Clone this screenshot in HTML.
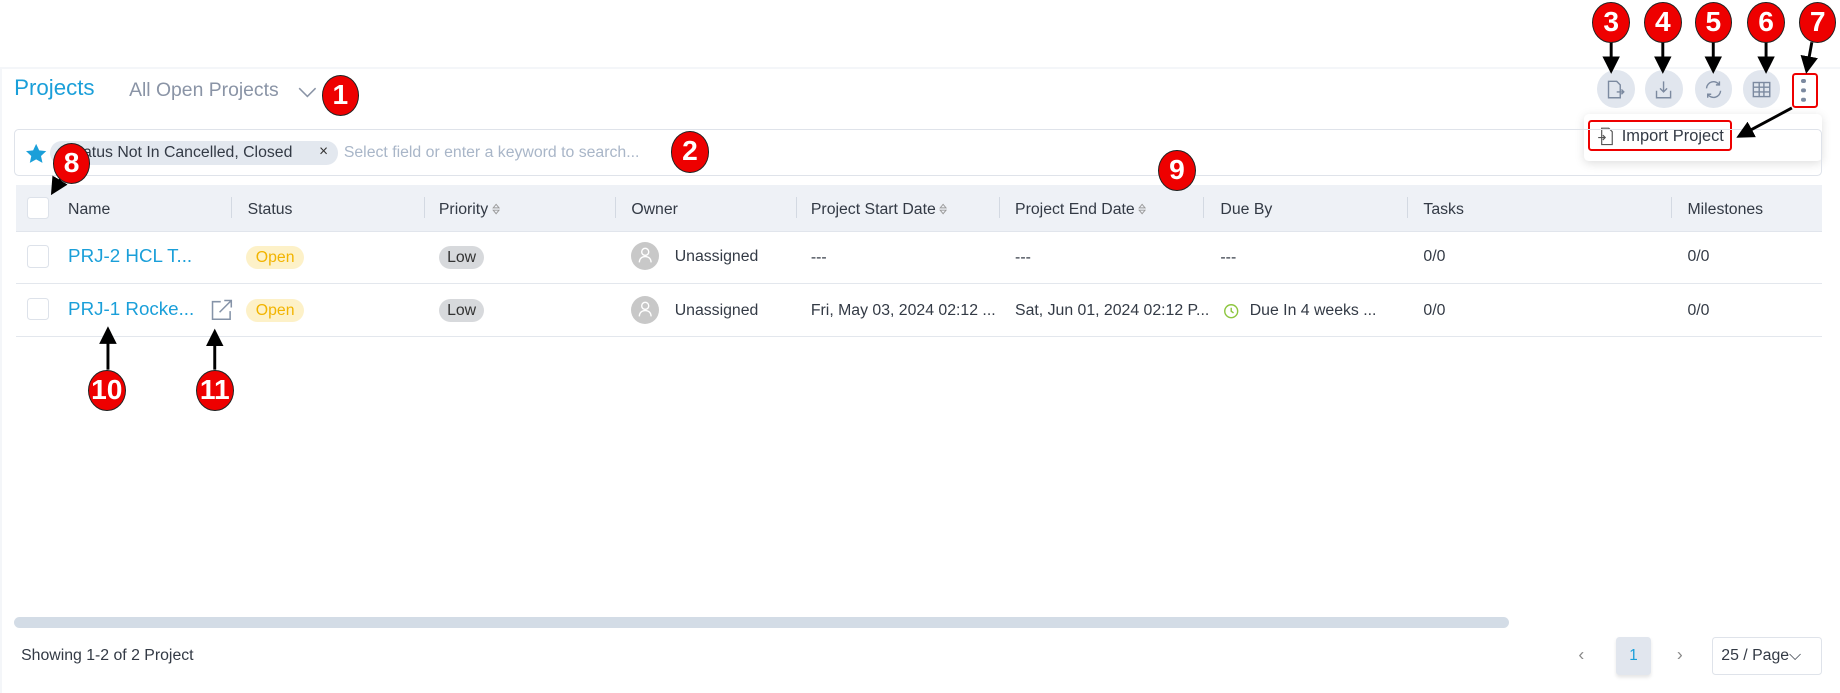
<!DOCTYPE html>
<html><head><meta charset="utf-8">
<style>
html,body{margin:0;padding:0;width:1840px;height:693px;overflow:hidden;background:#fff}
#w{position:relative;width:1568px;height:591px;zoom:1.17347;font-family:"Liberation Sans",sans-serif;color:#333a45;font-size:13.5px}
.a{position:absolute}
.panel{left:0;top:57px;width:1568px;height:534px;border-top:2px solid #f4f6f9;border-left:2px solid #f4f6f9;box-sizing:border-box}
.badge{position:absolute;width:32px;height:35px;margin:-17px 0 0 -16px;border-radius:50%;background:#e00;border:1.5px solid #222;box-sizing:border-box;color:#fff;font-weight:bold;font-size:24px;text-align:center;line-height:33px}
.ib{position:absolute;width:32px;height:32px;margin:-16px 0 0 -16px;border-radius:50%;background:#e1e6ee}
.ib svg{position:absolute;left:7px;top:7px}
.hd{top:158px;left:14px;width:1539px;height:39px;background:#eef1f6;border-bottom:1px solid #e1e5ec}
.th{position:absolute;top:171px;font-size:13.5px;color:#333a45}
.sep{position:absolute;top:168px;width:1px;height:18px;background:#d3d9e2}
.cb{position:absolute;left:23px;width:19px;height:19px;border:1px solid #dde2ea;border-radius:3px;background:#fff;box-sizing:border-box}
.row{position:absolute;left:14px;width:1539px;height:1px;background:#e3e7ed}
.td{position:absolute;font-size:13.5px;color:#333a45;white-space:nowrap}
.lnk{color:#1a9fd9;font-size:16px}
.open{position:absolute;background:#fdf1c8;color:#f2b400;border-radius:11px;padding:2px 8px;font-size:13.5px}
.low{position:absolute;background:#d7d9dc;color:#333;border-radius:11px;padding:2px 7px;font-size:13.5px}
.av{position:absolute;width:24px;height:24px;border-radius:50%;background:#c8c8c8}
.sort{display:inline-block;vertical-align:middle;margin-left:3px;width:7px;height:12px}
</style></head><body><div id="w">
<div class="a panel"></div>
<div class="a" style="left:12px;top:64px;font-size:19px;color:#1a9fd9">Projects</div>
<div class="a" style="left:110px;top:67px;font-size:16.5px;color:#8a94a6">All Open Projects</div>
<svg class="a" style="left:254px;top:74px" width="16" height="10"><path d="M1 1l7 7 7-7" fill="none" stroke="#8a94a6" stroke-width="1.3"/></svg>

<div class="ib" style="left:1377px;top:76px"><svg width="18" height="18" viewBox="0 0 18 18" fill="none" stroke="#7c8aa0" stroke-width="1.2"><path d="M3 2h7l3 3v11H3z"/><path d="M10 11h6M14 9l2 2-2 2"/></svg></div>
<div class="ib" style="left:1418px;top:76px"><svg width="18" height="18" viewBox="0 0 18 18" fill="none" stroke="#7c8aa0" stroke-width="1.2"><path d="M9 2v9M6 8l3 3 3-3M3 10v6h12v-6"/></svg></div>
<div class="ib" style="left:1460px;top:76px"><svg width="18" height="18" viewBox="0 0 18 18" fill="none" stroke="#7c8aa0" stroke-width="1.2"><path d="M3 8a6 6 0 0 1 11-3M15 10a6 6 0 0 1-11 3M14 2v3h-3M4 16v-3h3"/></svg></div>
<div class="ib" style="left:1501px;top:76px"><svg width="18" height="18" viewBox="0 0 18 18" fill="none" stroke="#7c8aa0" stroke-width="1.2"><rect x="2" y="3" width="14" height="12"/><path d="M2 7h14M2 11h14M7 3v12M11 3v12"/></svg></div>
<div class="a" style="left:1527px;top:62px;width:22px;height:30px;border:2.5px solid #e00;border-radius:3px;box-sizing:border-box"></div>
<div class="a" style="left:1535px;top:67px;width:4px;height:4px;border-radius:50%;background:#7c8aa0;box-shadow:0 8px 0 #7c8aa0,0 16px 0 #7c8aa0"></div>

<div class="a" style="left:1350px;top:97px;width:203px;height:40px;background:#fff;border-radius:4px;box-shadow:0 2px 8px rgba(0,0,0,.13)"></div>
<div class="a" style="left:1353px;top:102px;width:123px;height:27px;border:2.5px solid #e00;border-radius:3px;box-sizing:border-box"></div>
<svg class="a" style="left:1361px;top:108px" width="14" height="16" viewBox="0 0 14 16" fill="none" stroke="#555" stroke-width="1"><path d="M4 1h6l3 3v11H4zM1 9h6M5 7l2 2-2 2"/></svg>
<div class="a" style="left:1382px;top:108px;font-size:14px;color:#333a45">Import Project</div>

<div class="a" style="left:12px;top:110px;width:1541px;height:40px;border:1px solid #dfe3ea;border-radius:4px;box-sizing:border-box"></div>
<svg class="a" style="left:21px;top:122px" width="19" height="18" viewBox="0 0 24 23"><path d="M12 1l3.3 7 7.7.9-5.7 5.2 1.6 7.6L12 17.8 5.1 21.7l1.6-7.6L1 8.9 8.7 8z" fill="#1a9fd9"/></svg>
<div class="a" style="left:43px;top:120px;width:245px;height:21px;background:#e3e8ef;border-radius:10px"></div>
<div class="a" style="left:58px;top:123px;font-size:13.5px;color:#333a45">Status Not In Cancelled, Closed</div>
<div class="a" style="left:272px;top:122px;font-size:13px;color:#333">×</div>
<div class="a" style="left:293px;top:123px;font-size:13.5px;color:#a9b6c8">Select field or enter a keyword to search...</div>

<div class="a hd"></div>
<div class="cb" style="top:168px"></div>
<div class="th" style="left:58px">Name</div>
<div class="sep" style="left:197px"></div>
<div class="th" style="left:211px">Status</div>
<div class="sep" style="left:361px"></div>
<div class="th" style="left:374px">Priority<svg class="sort" viewBox="0 0 7 12"><path d="M1 5l2.5-3 2.5 3zM1 7l2.5 3 2.5-3z" fill="none" stroke="#999" stroke-width=".8"/></svg></div>
<div class="sep" style="left:524px"></div>
<div class="th" style="left:538px">Owner</div>
<div class="sep" style="left:678px"></div>
<div class="th" style="left:691px">Project Start Date<svg class="sort" viewBox="0 0 7 12"><path d="M1 5l2.5-3 2.5 3zM1 7l2.5 3 2.5-3z" fill="none" stroke="#999" stroke-width=".8"/></svg></div>
<div class="sep" style="left:851px"></div>
<div class="th" style="left:865px">Project End Date<svg class="sort" viewBox="0 0 7 12"><path d="M1 5l2.5-3 2.5 3zM1 7l2.5 3 2.5-3z" fill="none" stroke="#999" stroke-width=".8"/></svg></div>
<div class="sep" style="left:1025px"></div>
<div class="th" style="left:1040px">Due By</div>
<div class="sep" style="left:1199px"></div>
<div class="th" style="left:1213px">Tasks</div>
<div class="sep" style="left:1424px"></div>
<div class="th" style="left:1438px">Milestones</div>

<div class="cb" style="top:209px"></div>
<div class="td lnk" style="left:58px;top:209px">PRJ-2 HCL T...</div>
<div class="open" style="left:210px;top:210px">Open</div>
<div class="low" style="left:374px;top:210px">Low</div>
<div class="av" style="left:538px;top:206px"></div>
<div class="td" style="left:575px;top:211px">Unassigned</div>
<div class="td" style="left:691px;top:212px">---</div>
<div class="td" style="left:865px;top:212px">---</div>
<div class="td" style="left:1040px;top:212px">---</div>
<div class="td" style="left:1213px;top:211px">0/0</div>
<div class="td" style="left:1438px;top:211px">0/0</div>
<div class="row" style="top:241px"></div>

<div class="cb" style="top:254px"></div>
<div class="td lnk" style="left:58px;top:254px">PRJ-1 Rocke...</div>
<svg class="a" style="left:178px;top:253px" width="22" height="22" viewBox="0 0 22 22" fill="none" stroke="#8593a8" stroke-width="1.3"><path d="M10 4H3v15h15v-7M9 13L19 3M13 3h6v6"/></svg>
<div class="open" style="left:210px;top:255px">Open</div>
<div class="low" style="left:374px;top:255px">Low</div>
<div class="av" style="left:538px;top:252px"></div>
<div class="td" style="left:575px;top:257px">Unassigned</div>
<div class="td" style="left:691px;top:257px">Fri, May 03, 2024 02:12 ...</div>
<div class="td" style="left:865px;top:257px">Sat, Jun 01, 2024 02:12 P...</div>
<svg class="a" style="left:1042px;top:258px" width="14" height="14" viewBox="0 0 14 14" fill="none" stroke="#8dc63f" stroke-width="1.2"><circle cx="7" cy="7" r="5.5"/><path d="M7 4v3l2 1.5"/></svg>
<div class="td" style="left:1065px;top:257px">Due In 4 weeks ...</div>
<div class="td" style="left:1213px;top:257px">0/0</div>
<div class="td" style="left:1438px;top:257px">0/0</div>
<div class="row" style="top:286px"></div>

<svg class="a" style="left:543px;top:210px" width="14" height="16" viewBox="0 0 14 16" fill="none" stroke="#fff" stroke-width="1.2"><circle cx="7" cy="5" r="3"/><path d="M2 14c0-3 2-5 5-5s5 2 5 5"/></svg>
<svg class="a" style="left:543px;top:256px" width="14" height="16" viewBox="0 0 14 16" fill="none" stroke="#fff" stroke-width="1.2"><circle cx="7" cy="5" r="3"/><path d="M2 14c0-3 2-5 5-5s5 2 5 5"/></svg>

<div class="a" style="left:12px;top:526px;width:1274px;height:9px;border-radius:5px;background:#d3dce6"></div>
<div class="a" style="left:18px;top:551px;font-size:13.5px;color:#333a45">Showing 1-2 of 2 Project</div>
<div class="a" style="left:1345px;top:549px;font-size:15px;color:#888">‹</div>
<div class="a" style="left:1377px;top:543px;width:30px;height:32px;background:#e1e6ee;border-radius:3px;color:#1a9fd9;text-align:center;line-height:32px;font-size:13px;box-shadow:0 2px 3px rgba(0,0,0,.1)">1</div>
<div class="a" style="left:1429px;top:549px;font-size:15px;color:#888">›</div>
<div class="a" style="left:1459px;top:543px;width:94px;height:32px;border:1px solid #dfe3ea;border-radius:3px;box-sizing:border-box;font-size:13.5px;line-height:30px;padding-left:7px">25 / Page⌵</div>

<svg class="a" style="left:0;top:0" width="1568" height="591">
<defs><marker id="m" markerWidth="6" markerHeight="6" refX="4" refY="3" orient="auto"><path d="M0 0L6 3 0 6z" fill="#000"/></marker></defs>
<g stroke="#000" stroke-width="2.5" marker-end="url(#m)">
<line x1="1373" y1="36" x2="1373" y2="58"/>
<line x1="1417" y1="36" x2="1417" y2="58"/>
<line x1="1460" y1="36" x2="1460" y2="58"/>
<line x1="1505" y1="36" x2="1505" y2="58"/>
<line x1="1544" y1="36" x2="1540" y2="58"/>
<line x1="1527" y1="92" x2="1484" y2="115"/>
<line x1="52" y1="152" x2="46" y2="162"/>
<line x1="92" y1="315" x2="92" y2="283"/>
<line x1="183" y1="315" x2="183" y2="285"/>
</g></svg>

<div class="badge" style="left:290px;top:81px">1</div>
<div class="badge" style="left:588px;top:129px">2</div>
<div class="badge" style="left:1373px;top:19px">3</div>
<div class="badge" style="left:1417px;top:19px">4</div>
<div class="badge" style="left:1460px;top:19px">5</div>
<div class="badge" style="left:1505px;top:19px">6</div>
<div class="badge" style="left:1549px;top:19px">7</div>
<div class="badge" style="left:61px;top:139px">8</div>
<div class="badge" style="left:1003px;top:145px">9</div>
<div class="badge" style="left:91px;top:332px">10</div>
<div class="badge" style="left:183px;top:332px">11</div>
</div></body></html>
